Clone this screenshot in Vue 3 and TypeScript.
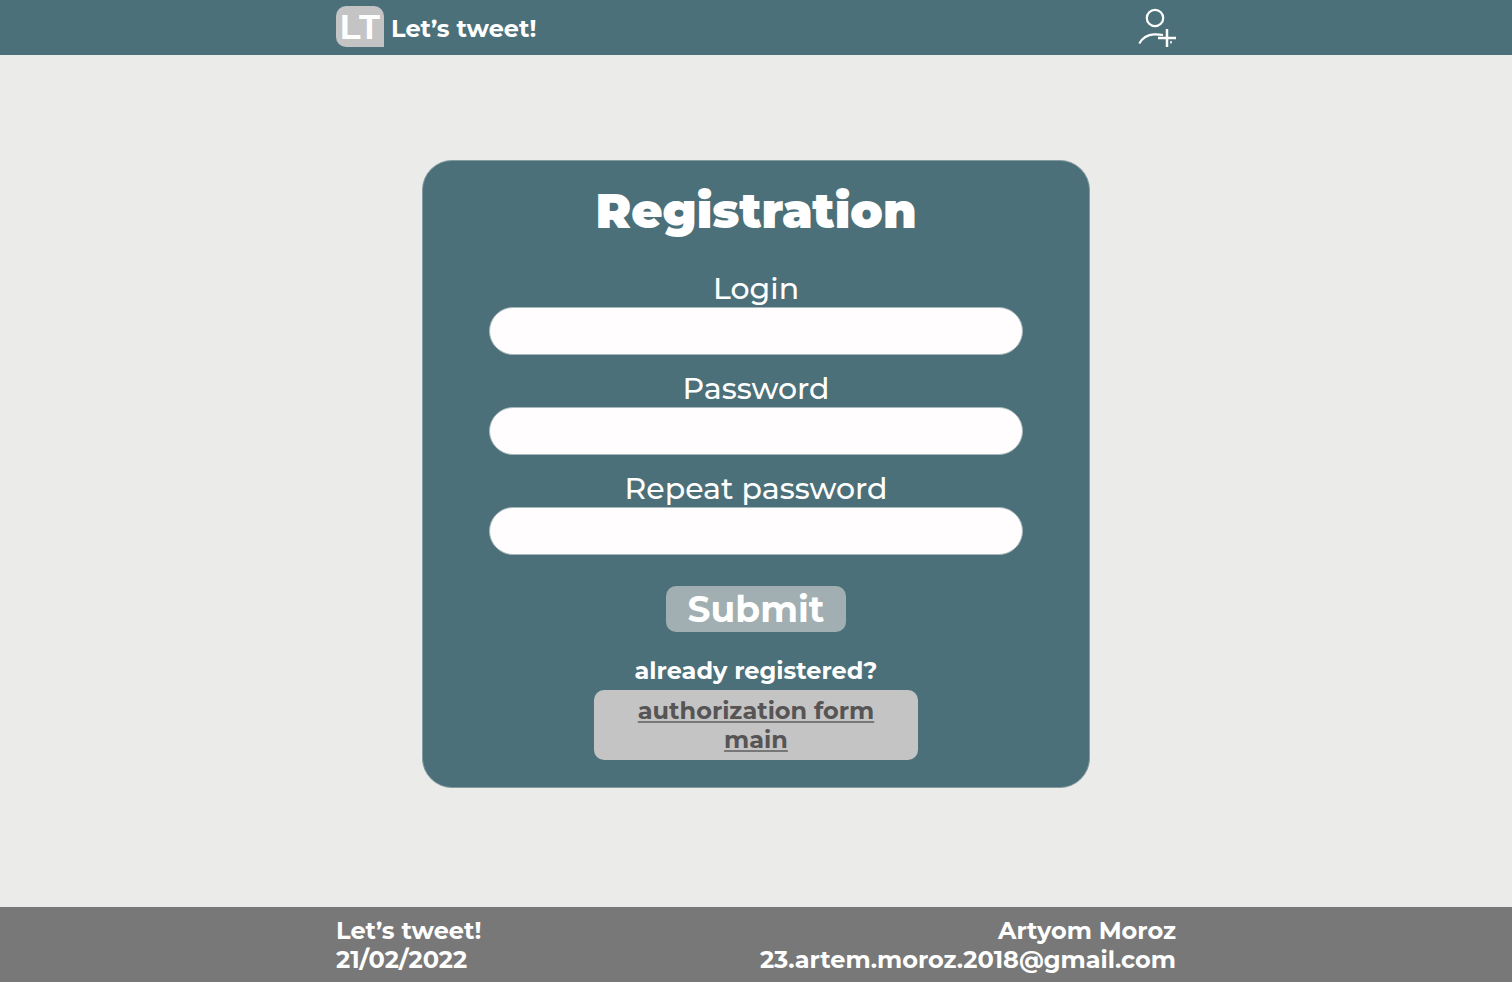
<script setup lang="ts">
import { reactive } from 'vue'

type FieldName = 'login' | 'password' | 'repeat'

interface Field {
  name: FieldName
  label: string
  type: string
}

const fields: Field[] = [
  { name: 'login', label: 'Login', type: 'text' },
  { name: 'password', label: 'Password', type: 'password' },
  { name: 'repeat', label: 'Repeat password', type: 'password' },
]

const form = reactive<Record<FieldName, string>>({ login: '', password: '', repeat: '' })
</script>

<template>
  <div class="page">
    <header class="header">
      <div class="container header-row">
        <a class="brand" href="#">
          <span class="logo">LT</span>
          <span class="brand-name">Let’s tweet!</span>
        </a>
        <button class="add-user" type="button" aria-label="Add user">
          <svg width="38" height="41" viewBox="0 0 38 41" fill="none" stroke="#fff" stroke-width="2.2">
            <circle cx="17" cy="12" r="8.2" />
            <path d="M1.300 37.600C4.500 31.500 9.500 28.600 16 28.300C19.500 28.200 22.500 28.500 25 29" />
            <path d="M20 32H38M29 23V41" stroke-width="2.500" />
            <path d="M33 35V37.500" stroke-width="1.500" />
          </svg>
        </button>
      </div>
    </header>

    <main class="main">
      <form class="card" @submit.prevent>
        <h1 class="title">Registration</h1>
        <div class="fields">
          <div v-for="field in fields" :key="field.name" class="field">
            <label :for="field.name">{{ field.label }}</label>
            <input :id="field.name" v-model="form[field.name]" :type="field.type" />
          </div>
        </div>
        <button class="submit" type="submit">Submit</button>
        <p class="question">already registered?</p>
        <nav class="links">
          <a href="#">authorization form</a>
          <a href="#">main</a>
        </nav>
      </form>
    </main>

    <footer class="footer">
      <div class="container footer-row">
        <div>
          <div>Let’s tweet!</div>
          <div>21/02/2022</div>
        </div>
        <address class="contact">
          <div>Artyom Moroz</div>
          <div>23.artem.moroz.2018@gmail.com</div>
        </address>
      </div>
    </footer>
  </div>
</template>

<style>
body {
  margin: 0;
  background: #ebebe9;
}
</style>

<style scoped>
.page {
  display: flex;
  flex-direction: column;
  min-height: 100vh;
  font-family: Montserrat, Inter, "Open Sans", sans-serif;
  font-size: 24px;
  font-weight: 700;
  line-height: 29px;
  color: #fff;
}

.container {
  box-sizing: border-box;
  width: 100%;
  max-width: 840px;
  margin: 0 auto;
}

.header {
  background: #4b7079;
}

.header-row {
  display: flex;
  align-items: center;
  justify-content: space-between;
  padding: 6px 0 8px;
}

.brand {
  display: flex;
  align-items: center;
  gap: 7px;
  color: inherit;
  text-decoration: none;
}

.logo {
  width: 48px;
  border-radius: 10px 10px 0 10px;
  background: #c4c4c4;
  font-family: "Liberation Sans", Arial, sans-serif;
  font-size: 35px;
  line-height: 41px;
  text-align: center;
}

.brand-name {
  padding-top: 4px;
}

.add-user {
  display: flex;
  padding: 0;
  border: 0;
  background: none;
  cursor: pointer;
}

.main {
  flex: 1;
  padding: 105px 16px 119px;
}

.card {
  box-sizing: border-box;
  display: flex;
  flex-direction: column;
  align-items: center;
  width: 100%;
  max-width: 668px;
  margin: 0 auto;
  padding: 19px 66px 27px;
  border: 1px solid #839ba1;
  border-radius: 30px;
  background: #4b7079;
}

.title {
  margin: 0 0 29px;
  font-size: 48px;
  font-weight: 900;
  line-height: 62px;
}

.fields {
  display: flex;
  flex-direction: column;
  gap: 16px;
  width: 100%;
}

.field {
  display: flex;
  flex-direction: column;
  text-align: center;
}

.field label {
  font-size: 30px;
  font-weight: 500;
  line-height: 36px;
}

.field input {
  box-sizing: border-box;
  width: 100%;
  height: 48px;
  padding: 0 24px;
  border: 1px solid #a9b8bc;
  border-radius: 24px;
  background: #fffdfe;
  font: inherit;
  color: #4b7079;
}

.submit {
  width: 180px;
  margin: 31px 0 24px;
  padding: 0;
  border: 0;
  border-radius: 10px;
  background: #a1afb2;
  font: inherit;
  font-size: 36px;
  line-height: 46px;
  color: inherit;
  cursor: pointer;
}

.question {
  margin: 0 0 5px;
}

.links {
  box-sizing: border-box;
  display: flex;
  flex-direction: column;
  align-items: center;
  width: 100%;
  max-width: 324px;
  padding: 6px 0;
  border-radius: 10px;
  background: #c4c4c4;
}

.links a {
  color: #565455;
  text-decoration: underline;
  text-decoration-color: #777;
  text-decoration-thickness: 2px;
  text-decoration-skip-ink: none;
  text-underline-offset: 2px;
}

.footer {
  background: #787878;
}

.footer-row {
  display: flex;
  justify-content: space-between;
  padding: 9px 0 8px;
}

.contact {
  font-style: normal;
  text-align: right;
}
</style>
